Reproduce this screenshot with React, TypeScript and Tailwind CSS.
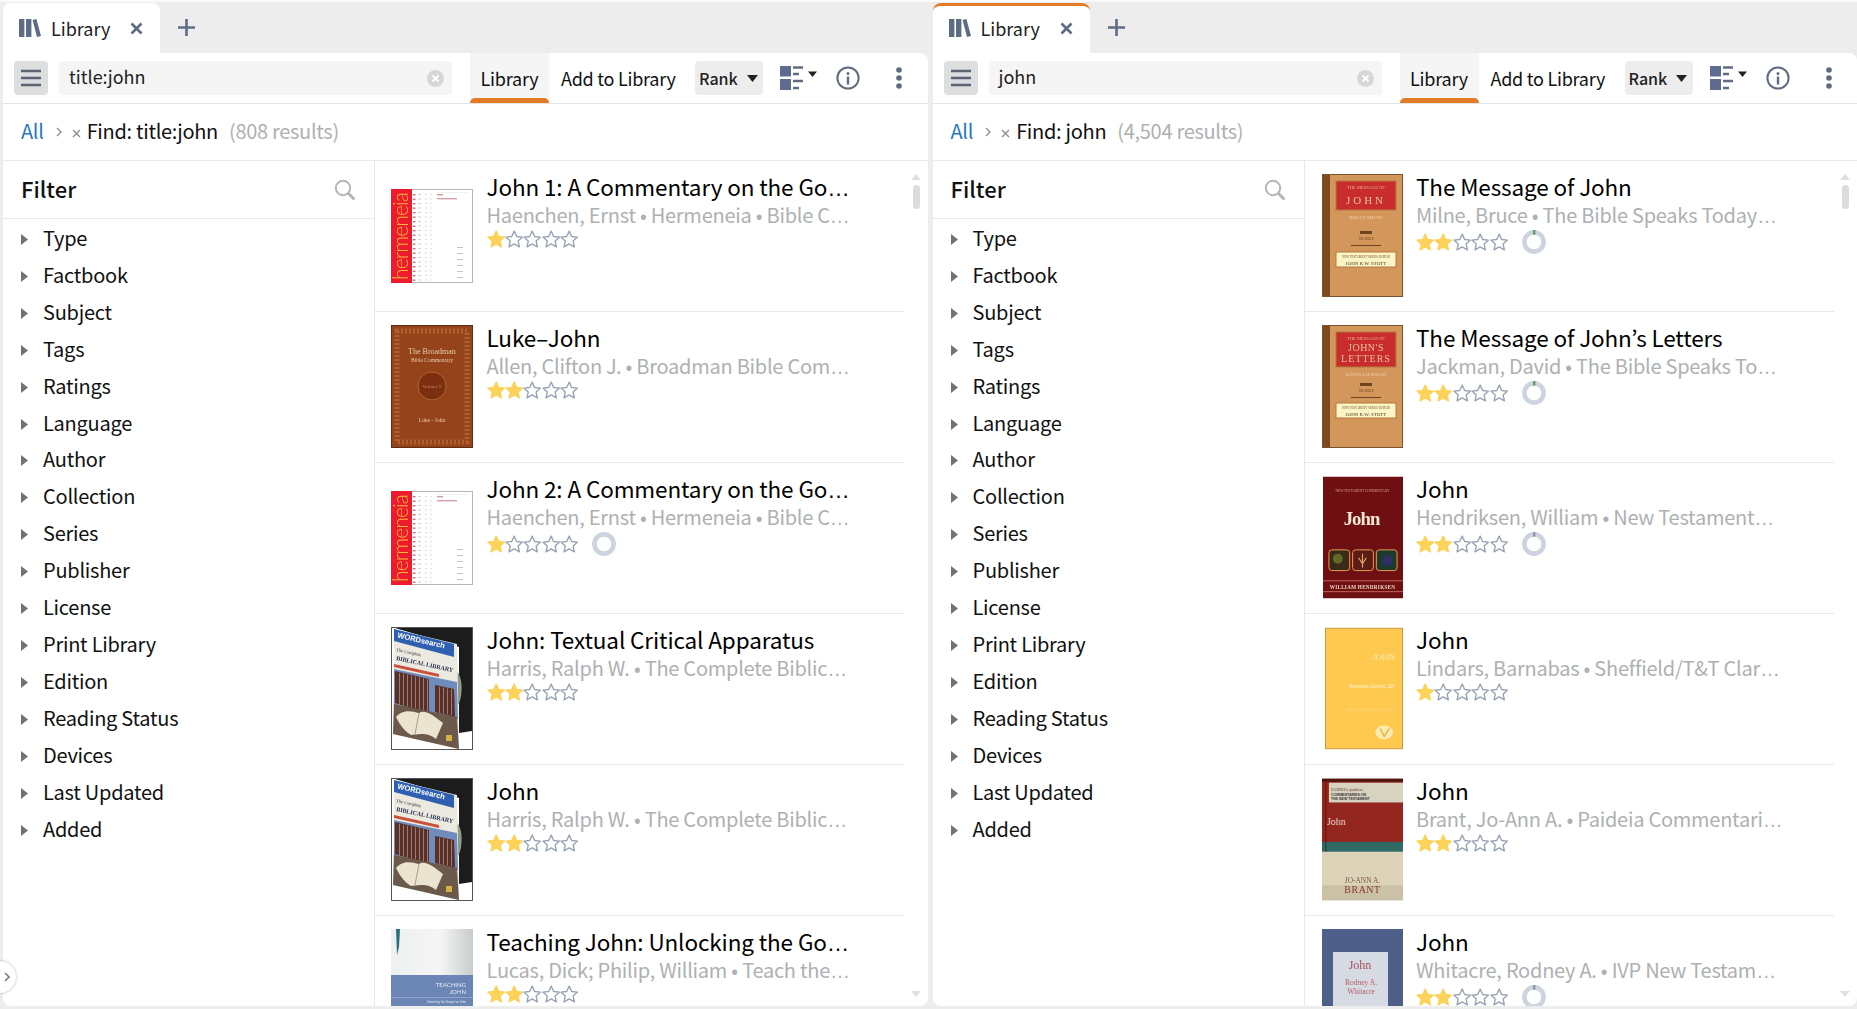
import React from 'react';

const filters = ['Type', 'Factbook', 'Subject', 'Tags', 'Ratings', 'Language', 'Author', 'Collection', 'Series', 'Publisher', 'License', 'Print Library', 'Edition', 'Reading Status', 'Devices', 'Last Updated', 'Added'];

const serif = "'Liberation Serif', serif";

const Hermeneia = () => {
    const dots = [];
    for (let r = 0; r < 20; r++) {
        dots.push(<rect key={'a' + r} x={22} y={5 + r * 4.5} width={2.5} height={1.4} fill="#d9647a" />);
        dots.push(<rect key={'b' + r} x={27} y={5 + r * 4.5} width={3} height={1} fill="#d0d0d0" />);
        dots.push(<rect key={'c' + r} x={34} y={5 + r * 4.5} width={2} height={1} fill="#dcdcdc" />);
        dots.push(<rect key={'d' + r} x={39} y={5 + r * 4.5} width={2} height={1} fill="#e0e0e0" />);
    }
    return (
        <svg width="82" height="94" viewBox="0 0 82 94" className="block">
            <rect x="0.5" y="0.5" width="81" height="93" fill="#fff" stroke="#b5b5b5" />
            <rect x="0" y="0" width="21" height="94" fill="#ee1b2f" />
            <text transform="translate(17 91) rotate(-90)" fontSize="21" fill="#f5b93a" fontFamily="'Lato', sans-serif" fontWeight="300" textLength="88">hermeneia</text>
            {dots}
            <rect x="46" y="5" width="6" height="1.4" fill="#c9a0a0" />
            <rect x="46" y="9" width="20" height="1.4" fill="#d8a0a8" />
            <rect x="46" y="3" width="30" height="0.6" fill="#e4e4e4" />
            {[58, 64, 70, 76, 82, 88].map((y) => <rect key={y} x={66} y={y} width={6} height={1} fill="#c4c4c4" />)}
        </svg>
    );
};

const Broadman = () => (
    <svg width="82" height="123" viewBox="0 0 82 123" className="block">
        <rect width="82" height="123" fill="#94431a" />
        <rect x="0.5" y="0.5" width="81" height="122" fill="none" stroke="#5e2c12" />
        <rect x="6" y="6" width="70" height="111" fill="none" stroke="#b0602f" strokeWidth="5" strokeDasharray="2 2" />
        <text x="41" y="29" textAnchor="middle" fontSize="8" fill="#e8c9a8" fontFamily={serif}>The Broadman</text>
        <text x="41" y="37" textAnchor="middle" fontSize="5.5" fill="#e8c9a8" fontFamily={serif}>Bible Commentary</text>
        <ellipse cx="41" cy="61" rx="14" ry="14" fill="#7c2e10" stroke="#c07a3f" strokeWidth="0.7" />
        <text x="41" y="63" textAnchor="middle" fontSize="5" fill="#c98a55" fontFamily={serif}>Volume 9</text>
        <text x="41" y="97" textAnchor="middle" fontSize="5.5" fill="#e8c9a8" fontFamily={serif}>Luke - John</text>
    </svg>
);

const WordSearch = () => (
    <svg width="82" height="123" viewBox="0 0 82 123" className="block">
        <rect x="0.5" y="0.5" width="81" height="122" fill="#fff" stroke="#555" />
        <path d="M4 1 L81 1 L81 104 L68 106 L68 20 Z" fill="#1c1c1c" />
        <path d="M66 45 C72 50 72 70 67 78 Z" fill="#8f9a8a" />
        <path d="M3 2 L66 17 L68 122 L2 107 Z" fill="#ece9e0" />
        <path d="M3 2 L63 17 L63 30 L3 14 Z" fill="#2e5fb0" />
        <text transform="translate(6 10.5) rotate(13)" fontSize="7.6" fontWeight="700" fill="#fff" fontFamily="'Liberation Sans', sans-serif">WORDsearch</text>
        <text transform="translate(5 24) rotate(12)" fontSize="4.5" fill="#333" fontFamily={serif}>The Complete</text>
        <text transform="translate(5 33) rotate(12)" fontSize="6" fontWeight="700" fill="#27304f" fontFamily={serif}>BIBLICAL LIBRARY</text>
        <path d="M3 37 L48 47 L48 50 L3 40 Z" fill="#c9503a" />
        <path d="M3 42 L66 55 L67 92 L3 78 Z" fill="#6f8cbc" />
        <path d="M4 44 L38 52 L38 87 L4 76 Z" fill="#5b2f29" />
        <path d="M44 58 L63 62 L64 90 L44 85 Z" fill="#5b2f29" />
        {[8, 12, 16, 20, 24, 28, 32, 36].map((x) => <rect key={x} x={x} y={44 + x * 0.23} width="0.9" height="32" fill="#a08876" />)}
        {[48, 52, 56, 60].map((x) => <rect key={x} x={x} y={59 + (x - 44) * 0.2} width="0.9" height="26" fill="#a08876" />)}
        <path d="M3 77 L66 90 L68 122 L2 107 Z" fill="#6b5a4c" />
        <path d="M5 90 C12 82 20 84 28 86 C34 82 42 88 52 96 L45 112 C36 104 24 108 20 108 C14 104 10 100 5 90 Z" fill="#ebe4d0" />
        <path d="M28 86 L24 107" stroke="#9d8a6c" strokeWidth="0.8" />
        <rect x="55" y="108" width="6" height="6" fill="#d7b23e" />
    </svg>
);

const TeachingJohn = () => (
    <svg width="82" height="123" viewBox="0 0 82 123" className="block">
        <defs>
            <linearGradient id="tjg" x1="0" x2="1" y1="0" y2="0">
                <stop offset="0" stopColor="#eef0f0" />
                <stop offset="0.6" stopColor="#f4f5f4" />
                <stop offset="1" stopColor="#c9cccd" />
            </linearGradient>
        </defs>
        <rect width="82" height="123" fill="url(#tjg)" />
        <path d="M5 0 L9 0 L8 18 L6 26 Z" fill="#2c6f82" />
        <rect y="46" width="82" height="77" fill="#6b86b5" />
        <text x="75" y="58" textAnchor="end" fontSize="6" fill="#e4eaf4" fontFamily="'Lato', sans-serif">TEACHING</text>
        <text x="75" y="65" textAnchor="end" fontSize="6" fill="#e4eaf4" fontFamily="'Lato', sans-serif">JOHN</text>
        <rect y="68" width="82" height="0.6" fill="#a9bad6" />
        <text x="75" y="74" textAnchor="end" fontSize="3" fill="#dfe6f2" fontFamily="'Lato', sans-serif">Unlocking the Gospel on John</text>
        <text x="75" y="86" textAnchor="end" fontSize="3.3" fill="#e4eaf4" fontFamily="'Lato', sans-serif">DICK LUCAS &amp; WILLIAM PHILIP</text>
    </svg>
);

const Message = ({ letters }: { letters?: boolean }) => (
    <svg width="81" height="123" viewBox="0 0 81 123" className="block">
        <rect width="81" height="123" fill="#d3975b" />
        <rect width="8" height="123" fill="#7c4a1c" />
        <rect x="0.5" y="0.5" width="80" height="122" fill="none" stroke="#7a5330" />
        <rect x="14" y="7" width="60" height={letters ? 35 : 29} fill="#c92c2c" stroke="#b87a3e" />
        <text x="44" y="15" textAnchor="middle" fontSize="4.5" fill="#eab08c" fontFamily={serif}>THE MESSAGE OF</text>
        {letters ? (
            <>
                <text x="44" y="26" textAnchor="middle" fontSize="10" letterSpacing="0.5" fill="#eec1a0" fontFamily={serif}>JOHN'S</text>
                <text x="44" y="37" textAnchor="middle" fontSize="10" letterSpacing="1" fill="#eec1a0" fontFamily={serif}>LETTERS</text>
            </>
        ) : (
            <text x="44" y="30" textAnchor="middle" fontSize="11" letterSpacing="3" fill="#eec1a0" fontFamily={serif}>JOHN</text>
        )}
        <text x="44" y={letters ? 51 : 45} textAnchor="middle" fontSize="5" fill="#eed0a5" fontFamily={serif}>{letters ? 'DAVID JACKMAN' : 'BRUCE MILNE'}</text>
        <rect x="38" y={letters ? 58 : 57} width="12" height="3" fill="#6e4323" />
        <text x="44" y={letters ? 67 : 66} textAnchor="middle" fontSize="3" fill="#6e4323" fontFamily={serif}>THE BIBLE</text>
        <rect x="29" y={letters ? 72 : 71} width="30" height="1" fill="#6e4323" />
        <rect x="14" y="78" width="60" height="15" fill="#fbf4c6" stroke="#b87a3e" />
        <text x="44" y="84" textAnchor="middle" fontSize="3" fill="#7a5330" fontFamily={serif}>NEW TESTAMENT SERIES EDITOR</text>
        <text x="44" y="90.5" textAnchor="middle" fontSize="5" fill="#4e3520" fontFamily={serif}>JOHN R.W. STOTT</text>
    </svg>
);

const Hendriksen = () => (
    <svg width="80" height="123" viewBox="0 0 81 123" className="block">
        <rect width="81" height="123" fill="#6e0f12" />
        <text x="40" y="15" textAnchor="middle" fontSize="3.5" fill="#d9a08a" fontFamily={serif}>NEW TESTAMENT COMMENTARY</text>
        <text x="39" y="49" textAnchor="middle" fontSize="19" fontWeight="700" letterSpacing="-1" fill="#f4e7d4" fontFamily={serif}>John</text>
        <rect x="6" y="74" width="21" height="21" rx="3" fill="#3a2a18" stroke="#e8a050" />
        <rect x="30" y="74" width="21" height="21" rx="3" fill="#5a1c14" stroke="#e8a050" />
        <rect x="54" y="74" width="21" height="21" rx="3" fill="#1e3a2c" stroke="#e8a050" />
        <path d="M40 78 L40 92 M36 82 L40 88 L44 82" stroke="#d9a766" strokeWidth="1.2" fill="none" />
        <circle cx="15" cy="83" r="5" fill="#5d6a2a" />
        <circle cx="65" cy="85" r="5" fill="#2f2f6a" />
        <rect y="105" width="81" height="0.8" fill="#d87a6a" />
        <rect y="116" width="81" height="0.8" fill="#d87a6a" />
        <text x="40" y="113.5" textAnchor="middle" fontSize="5.2" fontWeight="700" letterSpacing="0.3" fill="#eed7c4" fontFamily={serif}>WILLIAM HENDRIKSEN</text>
    </svg>
);

const Lindars = () => (
    <svg width="78" height="123" viewBox="0 0 79 123" className="block">
        <rect x="0.5" y="0.5" width="78" height="122" fill="#fec94e" stroke="#c99a3d" />
        <text x="71" y="33" textAnchor="end" fontSize="9" fill="#fdebb5" fontFamily={serif}>JOHN</text>
        <text x="71" y="61" textAnchor="end" fontSize="4.8" fontWeight="700" fill="#fdebb5" fontFamily="'Lato', sans-serif">Barnabas Lindars, SSF</text>
        <text x="71" y="84" textAnchor="end" fontSize="4" fill="#fdd67e" fontFamily="'Lato', sans-serif">NEW TESTAMENT GUIDES</text>
        <ellipse cx="60" cy="106" rx="9" ry="7" fill="#fdeab0" />
        <path d="M56 102 L60 110 L65 102" stroke="#e8b64a" strokeWidth="1.5" fill="none" />
    </svg>
);

const Paideia = () => (
    <svg width="81" height="123" viewBox="0 0 82 123" className="block">
        <rect width="82" height="123" fill="#e6dcc4" />
        <rect width="82" height="64" fill="#93261f" />
        <rect width="82" height="3" fill="#4d1410" />
        <rect x="7" y="4" width="75" height="20" fill="#d8d2c0" />
        <text x="9" y="12" fontSize="4.6" fill="#5a3b30" fontFamily={serif}>PAIDEIA paideia</text>
        <text x="9" y="17" fontSize="3.6" fontWeight="700" fill="#3b3b3b" fontFamily="'Liberation Sans', sans-serif">COMMENTARIES ON</text>
        <text x="9" y="22" fontSize="3.6" fontWeight="700" fill="#3b3b3b" fontFamily="'Liberation Sans', sans-serif">THE NEW TESTAMENT</text>
        <text x="5" y="47" fontSize="10" fill="#e8d8c8" fontFamily={serif}>John</text>
        <rect y="64" width="82" height="10" fill="#2f6a64" />
        <rect x="3.5" width="0.8" height="74" fill="#4d1410" />
        <rect y="74" width="82" height="49" fill="#dbd2b8" />
        <rect y="108" width="82" height="15" fill="#b9ad90" opacity="0.45" />
        <text x="41" y="106" textAnchor="middle" fontSize="7.5" fill="#7a5a48" fontFamily={serif}>JO-ANN A.</text>
        <text x="41" y="116" textAnchor="middle" fontSize="10" letterSpacing="0.6" fill="#84392a" fontFamily={serif}>BRANT</text>
    </svg>
);

const Whitacre = () => (
    <svg width="81" height="123" viewBox="0 0 81 123" className="block">
        <rect width="81" height="123" fill="#4e5f8a" />
        <rect x="11" y="23" width="55" height="100" fill="#d6dbe3" />
        <text x="38" y="40" textAnchor="middle" fontSize="12" fill="#a34f5c" fontFamily={serif}>John</text>
        <text x="39" y="56" textAnchor="middle" fontSize="7.5" fill="#b85a66" fontFamily={serif}>Rodney A.</text>
        <text x="39" y="65" textAnchor="middle" fontSize="7.5" fill="#b85a66" fontFamily={serif}>Whitacre</text>
    </svg>
);

const Star = ({ on }: { on: boolean }) => (
    <svg width="18.4" height="18" viewBox="0 0 20 19.5" className="block shrink-0">
        <path d="M10 1.2 L12.7 7 L19 7.7 L14.3 12 L15.6 18.3 L10 15.1 L4.4 18.3 L5.7 12 L1 7.7 L7.3 7 Z" fill={on ? '#fcd25a' : '#fff'} stroke={on ? '#fcd25a' : '#97a3b5'} strokeWidth="1.5" strokeLinejoin="round" />
    </svg>
);

const Ring = ({ tick }: { tick?: string }) => (
    <svg width="24" height="24" viewBox="0 0 24 24" className="ml-[14px] block">
        <circle cx="12" cy="12" r="9.6" fill="none" stroke="#cdd4df" strokeWidth="4.6" />
        {tick && <rect x="11" y="0" width="2.4" height="4.6" fill={tick} />}
    </svg>
);

type Book = { title: string; sub: string; stars: number; cover: React.ReactNode; ring?: boolean; tick?: string };

const leftBooks: Book[] = [
    { title: 'John 1: A Commentary on the Go', sub: 'Haenchen, Ernst • Hermeneia • Bible C', stars: 1, cover: <Hermeneia /> },
    { title: 'Luke–John', sub: 'Allen, Clifton J. • Broadman Bible Com', stars: 2, cover: <Broadman /> },
    { title: 'John 2: A Commentary on the Go', sub: 'Haenchen, Ernst • Hermeneia • Bible C', stars: 1, ring: true, cover: <Hermeneia /> },
    { title: 'John: Textual Critical Apparatus', sub: 'Harris, Ralph W. • The Complete Biblic', stars: 2, cover: <WordSearch /> },
    { title: 'John', sub: 'Harris, Ralph W. • The Complete Biblic', stars: 2, cover: <WordSearch /> },
    { title: 'Teaching John: Unlocking the Go', sub: 'Lucas, Dick; Philip, William • Teach the', stars: 2, cover: <TeachingJohn /> },
];

const rightBooks: Book[] = [
    { title: 'The Message of John', sub: 'Milne, Bruce • The Bible Speaks Today', stars: 2, ring: true, tick: '#5fa35a', cover: <Message /> },
    { title: 'The Message of John’s Letters', sub: 'Jackman, David • The Bible Speaks To', stars: 2, ring: true, tick: '#5fa35a', cover: <Message letters /> },
    { title: 'John', sub: 'Hendriksen, William • New Testament', stars: 2, ring: true, tick: '#8d97a6', cover: <Hendriksen /> },
    { title: 'John', sub: 'Lindars, Barnabas • Sheffield/T&T Clar', stars: 1, cover: <Lindars /> },
    { title: 'John', sub: 'Brant, Jo-Ann A. • Paideia Commentari', stars: 2, cover: <Paideia /> },
    { title: 'John', sub: 'Whitacre, Rodney A. • IVP New Testam', stars: 2, ring: true, tick: '#8d97a6', cover: <Whitacre /> },
];

const Ellipsis = ({ show }: { show: boolean }) => show ? <span className="font-['Liberation_Sans',sans-serif] tracking-normal">…</span> : null;

const BookRow = ({ book }: { book: Book }) => {
    const titleCut = book.title.endsWith('Go');
    return (
        <div className="flex h-[151px] shrink-0 border-b border-[#e8e8e8] pt-[13px] pl-4">
            <div className="flex h-[123px] w-[82px] shrink-0 items-center justify-end blur-[0.3px]">{book.cover}</div>
            <div className="ml-[13.5px] min-w-0">
                <div className="-mt-px h-[26px] whitespace-nowrap text-[22.5px] leading-[26px] tracking-[-0.12px] text-black">{book.title}<Ellipsis show={titleCut} /></div>
                <div className="mt-[3px] h-[26px] whitespace-nowrap text-[20px] leading-[26px] tracking-[-0.25px] text-[#aeb0b2]">{book.sub}<Ellipsis show={true} /></div>
                <div className="mt-[2px] flex items-center">
                    {[1, 2, 3, 4, 5].map((n) => <Star key={n} on={n <= book.stars} />)}
                    {book.ring && <Ring tick={book.tick} />}
                </div>
            </div>
        </div>
    );
};

const Pane = ({ query, count, books, active }: { query: string; count: string; books: Book[]; active?: boolean }) => (
    <div className="flex min-w-0 flex-1 flex-col">
        {/* tab strip */}
        <div className="flex h-[50px] shrink-0 items-stretch">
            <div className={`flex w-[157px] items-center rounded-t-lg border-t-[3px] bg-white pb-[4px] pl-4 ${active ? 'border-[#e37a26]' : 'border-transparent'}`}>
                <svg width="22" height="18" viewBox="0 0 22 18" fill="#5d6b84" className="mt-[1px] block">
                    <rect x="0" y="0" width="5.4" height="18" />
                    <rect x="7" y="0" width="5.4" height="18" />
                    <path d="M13.6 1 L17.4 0 L22 17 L18 18 Z" />
                </svg>
                <span className="ml-[10px] w-[58px] text-[18px] leading-none whitespace-nowrap text-[#222]">Library</span>
                <svg width="13" height="13" viewBox="0 0 13 13" className="mt-[1px] ml-[21px] block">
                    <path d="M1.5 1.5 L11.5 11.5 M11.5 1.5 L1.5 11.5" stroke="#5d6b84" strokeWidth="2.6" />
                </svg>
            </div>
            <div className="flex flex-1 items-center rounded-bl-xl pb-[1px] pl-[18px]">
                <svg width="17" height="17" viewBox="0 0 17 17" className="block">
                    <path d="M8.5 0 V17 M0 8.5 H17" stroke="#5d6b84" strokeWidth="2.6" />
                </svg>
            </div>
        </div>
        {/* body */}
        <div className="flex min-h-0 flex-1 flex-col overflow-hidden rounded-tr-lg rounded-b-lg bg-white">
            <div className="flex h-[51px] shrink-0 items-start border-b border-[#e4e4e4] pl-[11px]">
                <div className="mt-2 flex h-[34px] w-[34px] items-center justify-center rounded bg-[#dcdee0]">
                    <svg width="20" height="18" viewBox="0 0 20 18" className="block">
                        <path d="M0 2 H20 M0 9 H20 M0 16 H20" stroke="#5a6473" strokeWidth="2.4" />
                    </svg>
                </div>
                <div className="mt-2 ml-[11px] flex h-[34px] w-[393px] items-center justify-between rounded bg-[#f5f5f5] pr-2 pl-[10px]">
                    <span className="pb-[4px] text-[18px] leading-none text-[#222]">{query}</span>
                    <svg width="17" height="17" viewBox="0 0 17 17" className="block">
                        <circle cx="8.5" cy="8.5" r="8.5" fill="#d5d7d9" />
                        <path d="M5.5 5.5 L11.5 11.5 M11.5 5.5 L5.5 11.5" stroke="#fff" strokeWidth="1.8" />
                    </svg>
                </div>
                <div className="relative ml-[18px] flex h-[50px] w-[79px] items-center justify-center bg-[#f5f5f5] text-[18px] leading-none tracking-[-0.2px] text-[#111]">
                    Library
                    <div className="absolute right-0 bottom-0 left-0 h-[5px] rounded-t-md bg-[#e37a26]" />
                </div>
                <div className="ml-[12px] flex h-[50px] w-[114px] items-center text-[18px] leading-none tracking-[-0.25px] whitespace-nowrap text-[#111]">Add to Library</div>
                <div className="mt-2 ml-[20px] flex h-[34px] w-[68px] shrink-0 items-center rounded bg-[#ededed] pl-[4px] text-[16px] leading-none font-medium text-[#222]">
                    Rank
                    <svg width="11" height="7" viewBox="0 0 11 7" className="ml-[9px] block"><path d="M0 0 H11 L5.5 7 Z" fill="#222" /></svg>
                </div>
                <svg width="38" height="24" viewBox="0 0 38 24" className="mt-[13px] ml-[17px] block shrink-0">
                    <rect x="0" y="0" width="11" height="10.5" fill="#5e6c91" />
                    <rect x="0" y="13" width="11" height="11" fill="#5e6c91" />
                    <path d="M13 1.5 H23 M13 8 H19 M13 15 H23 M13 22 H19" stroke="#5f6b80" strokeWidth="2.4" />
                    <path d="M28 5.5 H37 L32.5 11 Z" fill="#222" />
                </svg>
                <svg width="24" height="24" viewBox="0 0 24 24" className="mt-[13px] ml-[18px] block shrink-0">
                    <circle cx="12" cy="12" r="10.6" fill="none" stroke="#5f6b80" strokeWidth="2" />
                    <circle cx="12" cy="7.4" r="1.5" fill="#5f6b80" />
                    <rect x="10.8" y="10.5" width="2.4" height="8" fill="#5f6b80" />
                </svg>
                <svg width="8" height="24" viewBox="0 0 8 24" className="mt-[13px] ml-[35px] block shrink-0">
                    <circle cx="4" cy="4" r="2.8" fill="#5f6b80" />
                    <circle cx="4" cy="12" r="2.8" fill="#5f6b80" />
                    <circle cx="4" cy="20" r="2.8" fill="#5f6b80" />
                </svg>
            </div>
            <div className="flex h-[57px] shrink-0 items-center border-b border-[#ebebeb] pb-[3px] pl-[18px] text-[20px] leading-none tracking-[-0.3px]">
                <span className="text-[#2a77c0]">All</span>
                <svg width="6" height="10" viewBox="0 0 6 10" className="mt-[2px] ml-[12px] block"><path d="M1 1 L5 5 L1 9" fill="none" stroke="#8b8f94" strokeWidth="1.4" /></svg>
                <svg width="9" height="9" viewBox="0 0 9 9" className="mt-[5px] ml-[10px] block"><path d="M1 1 L8 8 M8 1 L1 8" stroke="#8b8f94" strokeWidth="1.4" /></svg>
                <span className="ml-[6px] text-[#111]">Find: {query}</span>
                <span className="ml-[11px] text-[#aeb0b2]">({count} results)</span>
            </div>
            <div className="flex min-h-0 flex-1">
                <div className="w-[372px] shrink-0 border-r border-[#e8e8e8]">
                    <div className="flex h-[58px] items-center justify-between border-b border-[#e8e8e8] pr-[18px] pl-[18px]">
                        <span className="pb-[4px] text-[22px] leading-none font-medium text-[#111]">Filter</span>
                        <svg width="22" height="22" viewBox="0 0 22 22" className="block">
                            <circle cx="9" cy="9" r="7.2" fill="none" stroke="#b3b6b9" strokeWidth="2" />
                            <path d="M14 14 L20.5 20.5" stroke="#b3b6b9" strokeWidth="3" />
                        </svg>
                    </div>
                    <div className="pt-px">
                        {filters.map((f) => (
                            <div key={f} className="flex h-[36.93px] items-center pl-[18px] text-[20px] leading-none tracking-[-0.25px] text-[#111]">
                                <svg width="7" height="11" viewBox="0 0 7 11" className="mt-[2px] block shrink-0"><path d="M0 0 L7 5.5 L0 11 Z" fill="#6f7276" /></svg>
                                <span className="ml-[15px] pb-[1px]">{f}</span>
                            </div>
                        ))}
                    </div>
                </div>
                <div className="relative flex min-w-0 flex-1">
                    <div className="flex w-[529px] shrink-0 flex-col">
                        {books.map((b) => <BookRow key={b.title + b.sub} book={b} />)}
                    </div>
                    <svg width="10" height="6" viewBox="0 0 10 6" className="absolute top-[13px] right-[7px] block"><path d="M5 0 L10 6 H0 Z" fill="#e0e0e0" /></svg>
                    <div className="absolute top-[24px] right-[8px] h-[24px] w-[7px] rounded bg-[#dcdcdc]" />
                    <svg width="10" height="6" viewBox="0 0 10 6" className="absolute right-[7px] bottom-[9px] block"><path d="M0 0 H10 L5 6 Z" fill="#e0e0e0" /></svg>
                </div>
            </div>
        </div>
    </div>
);

export default function App() {
    return (
        <div className="relative flex h-[1009px] w-full gap-[5px] overflow-hidden border-t-2 border-[#fafafa] bg-[#ededed] pt-px pb-[3px] pl-[3px] font-['Noto_Sans_CJK_JP','Noto_Sans',sans-serif]">
            <Pane query="title:john" count="808" books={leftBooks} />
            <Pane query="john" count="4,504" books={rightBooks} active />
            <div className="absolute bottom-[16px] left-[-16px] flex h-[32px] w-[32px] items-center justify-end rounded-full bg-white pr-[6px] shadow-[0_0_3px_rgba(0,0,0,0.3)]">
                <svg width="6" height="10" viewBox="0 0 6 10" className="block"><path d="M1 1 L5 5 L1 9" fill="none" stroke="#7c7f83" strokeWidth="1.6" /></svg>
            </div>
        </div>
    );
}
